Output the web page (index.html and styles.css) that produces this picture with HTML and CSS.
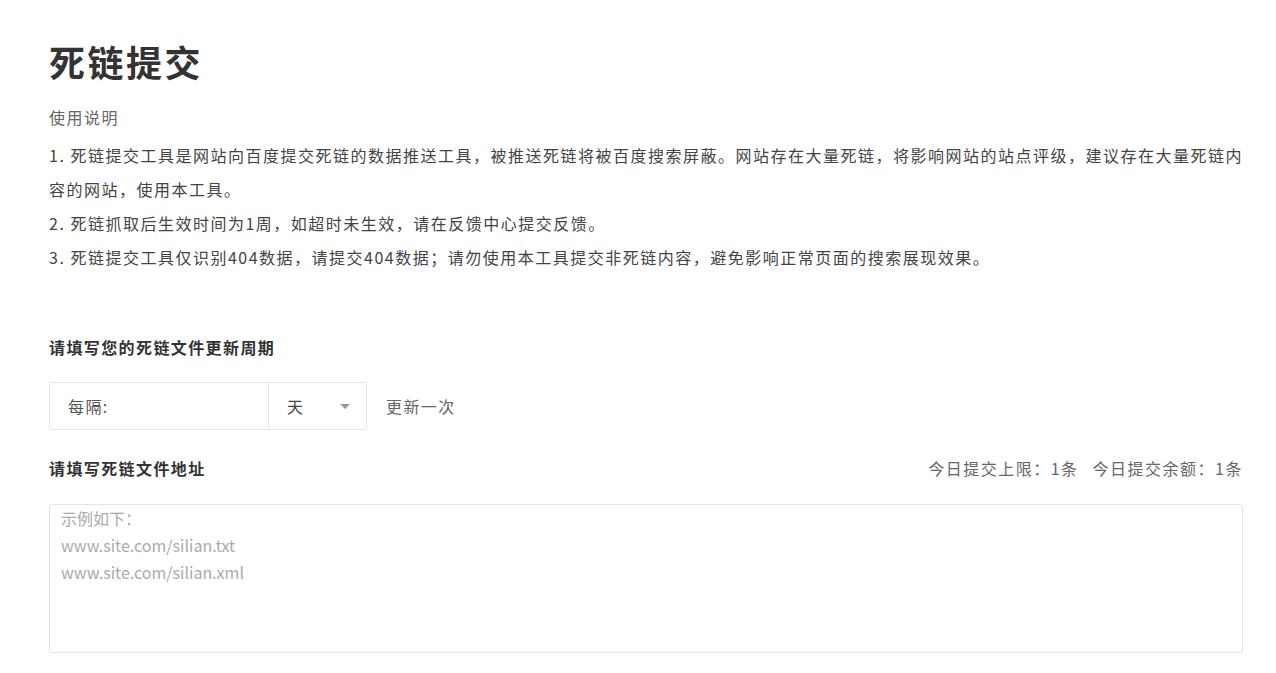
FILE: index.html
```html
<!DOCTYPE html>
<html lang="zh-CN">

<head>
    <meta charset="UTF-8">
    <meta name="viewport" content="width=device-width, initial-scale=1.0">
    <title>死链提交</title>
    <link rel="stylesheet" href="styles.css">
</head>

<body>
    <div class="page">
        <h1 class="page-title">死链提交</h1>

        <div class="guide">
            <div class="guide-head">使用说明</div>
            <p>1. 死链提交工具是网站向百度提交死链的数据推送工具，被推送死链将被百度搜索屏蔽。网站存在大量死链，将影响网站的站点评级，建议存在大量死链内容的网站，使用本工具。</p>
            <p>2. 死链抓取后生效时间为1周，如超时未生效，请在反馈中心提交反馈。</p>
            <p>3. 死链提交工具仅识别404数据，请提交404数据；请勿使用本工具提交非死链内容，避免影响正常页面的搜索展现效果。</p>
        </div>

        <div class="form-label first">请填写您的死链文件更新周期</div>
        <div class="period-row">
            <div class="period-box">
                <div class="period-input">每隔:</div>
                <div class="period-select">
                    <span>天</span>
                    <span class="caret"></span>
                </div>
            </div>
            <span class="period-tail">更新一次</span>
        </div>

        <div class="addr-head">
            <div class="form-label">请填写死链文件地址</div>
            <div class="quota">今日提交上限：1条<span class="quota-gap"></span>今日提交余额：1条</div>
        </div>
        <textarea class="addr-input" placeholder="示例如下：&#10;www.site.com/silian.txt&#10;www.site.com/silian.xml"></textarea>
    </div>
</body>

</html>
```

FILE: styles.css
```css
body {
    margin: 0;
    font-family: "Noto Sans CJK SC", "Liberation Sans", sans-serif;
    color: #333;
    background-color: #fff;
}

.page {
    padding: 36px 33px 0 49px;
}

.page-title {
    margin: 0;
    font-size: 36px;
    line-height: 50px;
    font-weight: bold;
    letter-spacing: 2.5px;
    color: #333;
}

.guide {
    margin-top: 14px;
    font-size: 16px;
    letter-spacing: 1.5px;
    line-height: 34px;
}

.guide-head {
    color: #666;
    margin-bottom: 4px;
}

.guide p {
    margin: 0;
    color: #444;
}

.form-label {
    font-size: 16px;
    letter-spacing: 1.4px;
    line-height: 20px;
    font-weight: bold;
    color: #333;
}

.form-label.first {
    margin-top: 63px;
}

.period-row {
    display: flex;
    align-items: center;
    margin-top: 25px;
}

.period-box {
    display: flex;
    height: 48px;
    border: 1px solid #e6e6e6;
    border-radius: 3px;
    box-sizing: border-box;
    font-size: 16px;
    letter-spacing: 1.4px;
}

.period-input {
    width: 218px;
    padding-left: 18px;
    box-sizing: border-box;
    display: flex;
    align-items: center;
    color: #555;
}

.period-select {
    width: 98px;
    border-left: 1px solid #e6e6e6;
    padding: 0 16px 0 18px;
    box-sizing: border-box;
    display: flex;
    align-items: center;
    justify-content: space-between;
    color: #444;
}

/* small grey down arrow */
.caret {
    width: 0;
    height: 0;
    border-left: 5px solid transparent;
    border-right: 5px solid transparent;
    border-top: 5px solid #999;
}

.period-tail {
    margin-left: 19px;
    font-size: 16px;
    letter-spacing: 1.4px;
    color: #666;
}

.addr-head {
    display: flex;
    justify-content: space-between;
    align-items: center;
    margin-top: 28px;
}

.quota {
    font-size: 16px;
    line-height: 20px;
    letter-spacing: 1.5px;
    color: #666;
}

.quota-gap {
    display: inline-block;
    width: 14px;
}

.addr-input {
    display: block;
    width: 100%;
    height: 149px;
    margin-top: 26px;
    padding: 0 11px;
    box-sizing: border-box;
    border: 1px solid #e3e3e3;
    border-radius: 3px;
    resize: none;
    font-family: "Noto Sans CJK SC", "Liberation Sans", sans-serif;
    font-size: 16px;
    line-height: 27px;
    color: #333;
    outline: none;
}

.addr-input::placeholder {
    color: #aaa;
}
```
